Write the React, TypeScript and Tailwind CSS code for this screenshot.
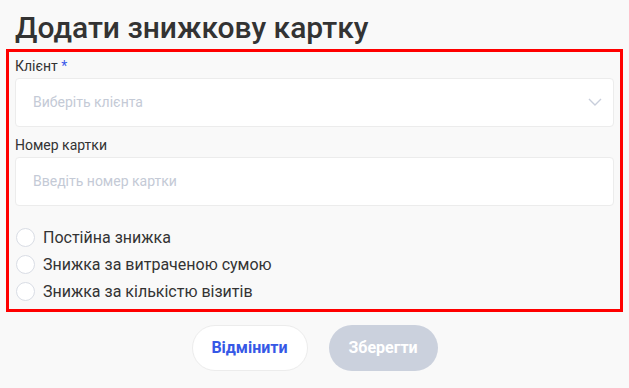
export default function App() {
  return (
    <div className="min-h-screen bg-[#f9f9f9] px-[6px] pt-[10px] font-['Roboto',sans-serif] text-[#333]">
      <h1 className="pl-[9px] text-[30px] font-medium leading-[36px]">Додати знижкову картку</h1>
      <form className="mt-[3px] border-[3px] border-[#ff0000] px-[6px] pt-[4px] pb-[4px]">
        <label className="block text-sm leading-5">
          Клієнт <span className="text-[#3b5bea]">*</span>
        </label>
        <div className="mt-[2px] flex h-[49px] items-center justify-between rounded border border-[#ececec] bg-white pb-[2px] pl-[17px] pr-[11px]">
          <span className="text-sm text-[#c4cad6]">Виберіть клієнта</span>
          <svg width="14" height="8" viewBox="0 0 14 8" fill="none">
            <path d="M1 1l6 6 6-6" stroke="#c8cedb" strokeWidth="1.4" />
          </svg>
        </div>

        <label className="mt-[8px] block text-sm leading-5">Номер картки</label>
        <div className="mt-[2px] flex h-[49px] items-center rounded border border-[#ececec] bg-white pb-[1px] pl-[17px]">
          <span className="text-sm text-[#c4cad6]">Введіть номер картки</span>
        </div>

        <div className="mt-[18px] flex flex-col">
          {["Постійна знижка", "Знижка за витраченою сумою", "Знижка за кількістю візитів"].map((t) => (
            <label key={t} className="flex h-[27px] items-center gap-[8px] text-base">
              <span className="ml-[1px] h-[19px] w-[19px] rounded-full border border-[#d9dde5] bg-white" />
              {t}
            </label>
          ))}
        </div>
      </form>

      <div className="mt-[13px] flex justify-center gap-[21px]">
        <button className="h-[46px] w-[116px] rounded-full border border-[#ececec] bg-white text-base font-bold text-[#3658e6]">
          Відмінити
        </button>
        <button className="h-[46px] w-[109px] rounded-full bg-[#cbd1dd] text-base font-bold text-white">
          Зберегти
        </button>
      </div>
    </div>
  );
}
